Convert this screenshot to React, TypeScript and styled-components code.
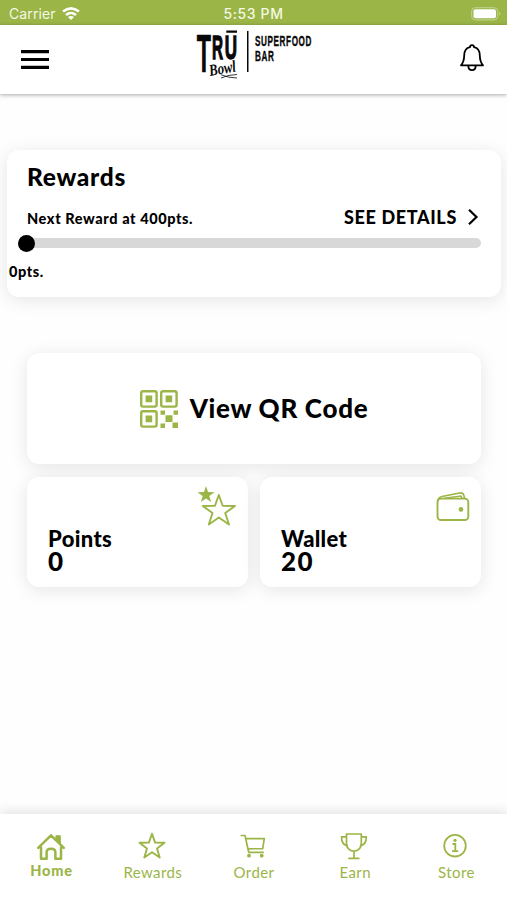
import React from "react";
import styled, { createGlobalStyle } from "styled-components";

const GREEN = "#9bb547";

const GlobalStyle = createGlobalStyle`
  * { box-sizing: border-box; }
  body { margin: 0; background: #fefefe; color: #000; font-family: Lato, "Open Sans", sans-serif; }
  svg { display: block; flex: none; overflow: visible; }
`;

const Screen = styled.div`
  width: 507px;
  height: 900px;
  display: flex;
  flex-direction: column;
  overflow: hidden;
  background: #fefefe;
`;

const StatusBar = styled.div`
  height: 25px;
  flex: none;
  display: grid;
  grid-template-columns: 1fr auto 1fr;
  align-items: center;
  padding: 2px 6px 0 9px;
  background: ${GREEN};
  color: #f4f8e4;
  font: 400 14px/22px Inter, sans-serif;
`;

const Carrier = styled.div`
  display: flex;
  align-items: center;
  gap: 6px;
  letter-spacing: 0.1px;
`;

const Time = styled.div`
  font-weight: 500;
  font-size: 14px;
  letter-spacing: 0.6px;
  margin-right: 3px;
`;

const Battery = styled.div`
  justify-self: end;
`;

const Header = styled.header`
  height: 69px;
  flex: none;
  display: grid;
  grid-template-columns: 1fr 116px 1fr;
  background: #fff;
  box-shadow: 0 1px 4px rgba(0, 0, 0, 0.34);
  padding: 0 21px;
`;

const MenuButton = styled.button`
  justify-self: start;
  align-self: start;
  margin: 25px 0 0;
  padding: 0;
  border: 0;
  background: none;
`;

const BellButton = styled(MenuButton)`
  justify-self: end;
  margin: 19px 2px 0 0;
`;

const Logo = styled.div`
  padding-top: 5px;
`;

const Main = styled.main`
  flex: 1;
  display: flex;
  flex-direction: column;
  padding-top: 56px;
`;

const Card = styled.section`
  background: #fff;
  border-radius: 12px;
  box-shadow: 0 3px 18px rgba(0, 0, 0, 0.1);
`;

const RewardsCard = styled(Card)`
  height: 147px;
  margin: 0 6px 0 7px;
  padding: 12px 20px 0;
`;

const Text = styled.div<{ $size: number; $line: number; $track?: number }>`
  font-size: ${(p) => p.$size}px;
  line-height: ${(p) => p.$line}px;
  letter-spacing: ${(p) => p.$track ?? 0}px;
  font-weight: 900;
  white-space: nowrap;
`;

const RewardRow = styled.div`
  display: flex;
  justify-content: space-between;
  align-items: center;
  height: 26px;
  margin-top: 14px;
`;

const NextReward = styled.div`
  padding-top: 1px;
`;

const Details = styled.a`
  display: flex;
  align-items: center;
  gap: 11px;
  padding: 0 3px 2px 0;
`;

const Track = styled.div`
  height: 10px;
  margin: 7px 0 13px;
  border-radius: 5px;
  background: #d8d8d8;
  display: flex;
  align-items: center;
`;

const Knob = styled.div`
  width: 17px;
  height: 17px;
  margin-left: -9px;
  border-radius: 50%;
  background: #000;
`;

const Progress = styled.div`
  margin-left: -18px;
`;

const Tiles = styled.div`
  display: grid;
  grid-template-columns: 221px 221px;
  gap: 13px 12px;
  margin: 56px 26px 0 27px;
`;

const QrCard = styled(Card)`
  grid-column: 1 / -1;
  height: 111px;
  display: flex;
  align-items: center;
  justify-content: center;
  gap: 12px;
`;

const QrLabel = styled.div`
  padding-bottom: 2px;
`;

const Tile = styled(Card)`
  height: 110px;
  display: grid;
  grid-template-columns: 1fr auto;
  padding: 0 12px 0 21px;
`;

const TileText = styled.div`
  padding-top: 51px;
`;

const TileIcon = styled.div<{ $top: number }>`
  padding-top: ${(p) => p.$top}px;
`;

const Nav = styled.nav`
  height: 86px;
  flex: none;
  display: grid;
  grid-template-columns: repeat(5, 1fr);
  padding: 18px 0 0 1px;
  background: #fff;
  box-shadow: 0 -3px 11px rgba(0, 0, 0, 0.11);
`;

const NavItem = styled.a<{ $active?: boolean }>`
  display: flex;
  flex-direction: column;
  align-items: center;
  gap: ${(p) => (p.$active ? 0 : 3)}px;
  color: ${GREEN};
  font-size: ${(p) => (p.$active ? 14.5 : 15)}px;
  line-height: 18px;
  font-weight: ${(p) => (p.$active ? 900 : 400)};
  letter-spacing: ${(p) => (p.$active ? 0.8 : 0.4)}px;
`;

const NavIcon = styled.div`
  margin-right: 2px;
`;

const star = "M14 1.8 17.1 10.6 26.5 10.8 19 16.5 21.7 25.5 14 20.2 6.3 25.5 9 16.5 1.5 10.8 10.9 10.6Z";

const LogoArt = () => (
  <svg width="116" height="50" viewBox="0 0 116 50" fill="#080808">
    <g fontFamily="Liberation Sans" fontWeight="700" stroke="#080808">
      <text fontSize="53" transform="translate(.7 42) scale(.44 1)" strokeWidth=".7">T</text>
      <text fontSize="34" transform="translate(16 29.3) scale(.45 1)" strokeWidth="1.4">R</text>
      <text fontSize="34" transform="translate(28.8 29.3) scale(.5 1)" strokeWidth="1.4">U</text>
      <text fontSize="14.5" transform="translate(59 15.5) scale(.56 1)" letterSpacing="1.1" strokeWidth=".4">SUPERFOOD</text>
      <text fontSize="14.5" transform="translate(59 31) scale(.56 1)" letterSpacing="1.1" strokeWidth=".4">BAR</text>
    </g>
    <path d="M30.3 .6h10.7v2.2H30.300zM51 1h1.500v41H51z" />
    <text x="14" y="46" fontFamily="Liberation Serif" fontStyle="italic" fontWeight="700" fontSize="16.5" textLength="27" lengthAdjust="spacingAndGlyphs" transform="rotate(-10 14 46)" stroke="#fff" strokeWidth="1.6" paintOrder="stroke">Bowl</text>
    <path d="M25 44.800q8 3.200 16 3.200M25 48q8-3.500 16-3.500" fill="none" stroke="#080808" strokeWidth=".8" />
  </svg>
);

const QrIcon = () => (
  <svg width="38" height="38" viewBox="0 0 38 38" fill={GREEN}>
    <g fill="none" stroke={GREEN} strokeWidth="2.4">
      <rect x="1.2" y="1.2" width="15.4" height="15.4" rx="1.8" />
      <rect x="21.2" y="1.2" width="15.4" height="15.4" rx="1.8" />
      <rect x="1.2" y="21.2" width="15.4" height="15.4" rx="1.8" />
    </g>
    <path d="M5.6 5.6h6.6v6.6H5.6zM25.6 5.6h6.6v6.6h-6.6zM5.6 25.6h6.6v6.6H5.6zM20.5 20.5H25v4.2h-4.5zM33.5 20.5H38v4.2h-4.5zM25.5 25.3h7v6.8h-7zM20.5 33.5H25V38h-4.5zM32.5 32.5H38V38h-5.5z" />
  </svg>
);

const PointsIcon = () => (
  <svg width="38" height="40" viewBox="0 0 38 40" fill="none" stroke={GREEN}>
    <path d="M8 0l2 6 6.5.2-5.2 3.9 1.9 6L8 12.5l-5.2 3.6 1.9-6L-.5 6.2 6 6Z" fill={GREEN} stroke="none" />
    <path d="M20.8 9 24.7 19.8 37 20 27.2 27 31 38.5 20.8 31.5 10.8 38.5 14.5 27 4.8 20 17 19.8Z" strokeWidth="1.9" strokeLinejoin="round" />
  </svg>
);

const WalletIcon = () => (
  <svg width="32" height="29" viewBox="0 0 32 29" fill="none" stroke={GREEN} strokeWidth="1.9">
    <rect x=".5" y="6.6" width="30.8" height="21.4" rx="3.5" />
    <path d="M.7 9.500Q.9 5.400 5 4.500L22.500 1q3.600-.6 4.300 2.200l.8 3.200M7.500 6.300 24 4l1.200 2.300" strokeWidth="1.6" strokeLinecap="round" />
    <circle cx="24" cy="17.4" r="2.3" fill={GREEN} stroke="none" />
  </svg>
);

const HomeIcon = () => (
  <svg width="30" height="30" viewBox="0 0 30 30" fill="none" stroke={GREEN} strokeWidth="2.5" strokeLinejoin="round" strokeLinecap="round">
    <path d="M2.2 15.8 15 3.4 27.8 15.8M5 15.5v11.3h5.6V20.5q0-3.7 4.4-3.7t4.4 3.7v6.3H25V15.5" />
    <path d="M20 3.8h4.2v7.7L20 7.6Z" fill={GREEN} strokeWidth="1.2" />
  </svg>
);

const StarIcon = () => (
  <svg width="28" height="28" viewBox="0 0 28 28" fill="none" stroke={GREEN} strokeWidth="1.9" strokeLinejoin="round"><path d={star} /></svg>
);

const CartIcon = () => (
  <svg width="28" height="28" viewBox="0 0 28 28" fill="none" stroke={GREEN} strokeWidth="1.7" strokeLinejoin="round" strokeLinecap="round">
    <path d="M2.3 3.5H6l3.7 16.8h14.5M6.8 6.6h18.5l-1.6 10.1L9 16.8" />
    <circle cx="10" cy="23.7" r="1.9" fill={GREEN} stroke="none" />
    <circle cx="22.7" cy="23.7" r="1.9" fill={GREEN} stroke="none" />
  </svg>
);

const TrophyIcon = () => (
  <svg width="28" height="28" viewBox="0 0 28 28" fill="none" stroke={GREEN} strokeWidth="1.7" strokeLinejoin="round" strokeLinecap="round">
    <path d="M6.5 2h14.8v9q0 7.5-7.4 8.2-7.4-.7-7.4-8.2ZM6.3 4.8H1.5q0 8 5.8 9M21.5 4.8h4.8q0 8-5.8 9M14 19.2v7M9 26.4h9.8" />
  </svg>
);

const InfoIcon = () => (
  <svg width="28" height="28" viewBox="0 0 28 28" fill="none" stroke={GREEN} strokeWidth="1.8">
    <circle cx="14" cy="13.7" r="10.8" />
    <path d="M11.5 12h2.8v7.2M11 19.2h6.2" />
    <circle cx="14" cy="8.3" r="1.6" fill={GREEN} stroke="none" />
  </svg>
);

const tabs = [
  { label: "Home", icon: <HomeIcon />, active: true },
  { label: "Rewards", icon: <StarIcon /> },
  { label: "Order", icon: <CartIcon /> },
  { label: "Earn", icon: <TrophyIcon /> },
  { label: "Store", icon: <InfoIcon /> },
];

export default function App() {
  return (
    <Screen>
      <GlobalStyle />
      <StatusBar>
        <Carrier>
          <span>Carrier</span>
          <svg width="18" height="14" viewBox="0 0 18 14" fill="none" stroke="#fff" strokeWidth="2.6">
            <path d="M1 4.6q8-6.4 16 0M4 8q5-4 10 0" />
            <path d="m9 13-3-3q3-2.2 6 0Z" fill="#fff" stroke="none" />
          </svg>
        </Carrier>
        <Time>5:53 PM</Time>
        <Battery>
          <svg width="31" height="14" viewBox="0 0 31 14">
            <rect x="1.7" y=".7" width="26" height="12.2" rx="3.5" fill="none" stroke="#c3d492" />
            <rect x="3.5" y="2.3" width="22.5" height="9" rx="2" fill="#fff" />
            <path d="M29.3 4.8q2.6 2 0 4Z" fill="#c3d492" />
          </svg>
        </Battery>
      </StatusBar>
      <Header>
        <MenuButton aria-label="Menu">
          <svg width="28" height="19" viewBox="0 0 28 19"><path d="M0 0h28v3.2H0zM0 7.9h28v3.2H0zM0 15.8h28V19H0z" /></svg>
        </MenuButton>
        <Logo><LogoArt /></Logo>
        <BellButton aria-label="Notifications">
          <svg width="24" height="28" viewBox="0 0 24 28" fill="none" stroke="#000" strokeWidth="1.8" strokeLinejoin="round">
            <path d="M10 3.2Q10 1.2 12 1.2T14 3.2C18.2 4 19.7 7.3 19.8 11.5c.1 5.2 1.1 7.5 3.2 9.8H1c2.1-2.3 3.1-4.6 3.2-9.8C4.3 7.3 5.8 4 10 3.2ZM8.3 21.5q0 4.7 3.7 4.7t3.7-4.7" />
          </svg>
        </BellButton>
      </Header>
      <Main>
        <RewardsCard>
          <Text $size={24.5} $line={29} $track={0.7}>Rewards</Text>
          <RewardRow>
            <NextReward><Text $size={14.5} $line={20} $track={0.6}>Next Reward at 400pts.</Text></NextReward>
            <Details>
              <Text $size={18} $line={22} $track={0.65}>SEE DETAILS</Text>
              <svg width="10" height="16" viewBox="0 0 10 16" fill="none" stroke="#000" strokeWidth="2.2"><path d="m1 .7 7.5 7.3L1 15.3" /></svg>
            </Details>
          </RewardRow>
          <Track><Knob /></Track>
          <Progress><Text $size={14.5} $line={22} $track={0.6}>0pts.</Text></Progress>
        </RewardsCard>
        <Tiles>
          <QrCard>
            <QrIcon />
            <QrLabel><Text $size={26} $line={32} $track={0.7}>View QR Code</Text></QrLabel>
          </QrCard>
          <Tile>
            <TileText>
              <Text $size={22} $line={22} $track={0.35}>Points</Text>
              <Text $size={26} $line={22}>0</Text>
            </TileText>
            <TileIcon $top={9}><PointsIcon /></TileIcon>
          </Tile>
          <Tile>
            <TileText>
              <Text $size={22} $line={22} $track={0.3}>Wallet</Text>
              <Text $size={26} $line={22} $track={1.5}>20</Text>
            </TileText>
            <TileIcon $top={15}><WalletIcon /></TileIcon>
          </Tile>
        </Tiles>
      </Main>
      <Nav>
        {tabs.map((t) => (
          <NavItem key={t.label} $active={t.active}>
            <NavIcon>{t.icon}</NavIcon>
            <span>{t.label}</span>
          </NavItem>
        ))}
      </Nav>
    </Screen>
  );
}
